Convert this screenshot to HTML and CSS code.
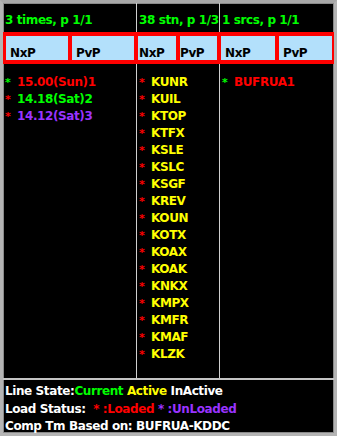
FILE: index.html
```html
<!DOCTYPE html>
<html lang="en">
<head>
  <meta charset="UTF-8">
  <title>Load Status</title>
  <link rel="stylesheet" href="styles.css">
</head>
<body>
  <div class="panel">
    <div class="cols heads">
      <div class="col">3 times, p 1/1</div>
      <div class="col">38 stn, p 1/3</div>
      <div class="col">1 srcs, p 1/1</div>
    </div>

    <div class="btns">
      <div class="btn">NxP</div>
      <div class="btn">PvP</div>
      <div class="btn tight">NxP</div>
      <div class="btn flush">PvP</div>
      <div class="btn">NxP</div>
      <div class="btn">PvP</div>
    </div>

    <div class="cols lists">
      <ul class="col">
        <li><span class="star green">*</span><span class="red">15.00(Sun)1</span></li>
        <li><span class="star red">*</span><span class="green">14.18(Sat)2</span></li>
        <li><span class="star red">*</span><span class="purple">14.12(Sat)3</span></li>
      </ul>
      <ul class="col stations">
        <li><span class="star red">*</span>KUNR</li>
        <li><span class="star red">*</span>KUIL</li>
        <li><span class="star red">*</span>KTOP</li>
        <li><span class="star red">*</span>KTFX</li>
        <li><span class="star red">*</span>KSLE</li>
        <li><span class="star red">*</span>KSLC</li>
        <li><span class="star red">*</span>KSGF</li>
        <li><span class="star red">*</span>KREV</li>
        <li><span class="star red">*</span>KOUN</li>
        <li><span class="star red">*</span>KOTX</li>
        <li><span class="star red">*</span>KOAX</li>
        <li><span class="star red">*</span>KOAK</li>
        <li><span class="star red">*</span>KNKX</li>
        <li><span class="star red">*</span>KMPX</li>
        <li><span class="star red">*</span>KMFR</li>
        <li><span class="star red">*</span>KMAF</li>
        <li><span class="star red">*</span>KLZK</li>
      </ul>
      <ul class="col">
        <li><span class="star green">*</span><span class="red">BUFRUA1</span></li>
      </ul>
    </div>

    <div class="legend">
      <div class="line">Line State:<span class="green">Current </span><span class="yellow">Active </span>InActive</div>
      <div class="line">Load Status:  <span class="red">* :Loaded</span> <span class="purple">* :UnLoaded</span></div>
      <div class="line">Comp Tm Based on: BUFRUA-KDDC</div>
    </div>
  </div>
</body>
</html>
```

FILE: styles.css
```css
body {
  margin: 0;
  background: #c0c0c0;
  font-family: 'DejaVu Sans', sans-serif;
  font-weight: bold;
  font-size: 12px;
  letter-spacing: -0.4px;
}

.panel {
  box-sizing: border-box;
  width: 337px;
  height: 436px;
  background: #000;
  border: 3px solid #b4b4b4;
  border-top-color: #a8a8a8;
  box-shadow: inset 0 0 0 1px #8a8a8a;
  display: flex;
  flex-direction: column;
  overflow: hidden;
}

.cols {
  display: grid;
  grid-template-columns: 133px 83px 1fr;
}

.cols .col + .col {
  border-left: 1px solid #cfcfcf;
}

.heads {
  height: 29px;
  color: #00ff00;
  line-height: 14px;
}

.heads .col {
  padding: 10px 0 0 2px;
  white-space: nowrap;
  overflow: hidden;
}

.btns {
  height: 32px;
  box-sizing: border-box;
  padding: 4px 1px 4px 3px;
  background: #ff0000;
  display: grid;
  grid-template-columns: 62px 62px 38px 37px 54px 53px;
  column-gap: 4px;
}

.btn {
  background: #b3e0fb;
  color: #000;
  line-height: 14px;
  padding-left: 4px;
  display: flex;
  align-items: flex-end;
  overflow: hidden;
}

.btn.tight { padding-left: 1px; }
.btn.flush { padding-left: 0; }

.lists {
  flex: 1;
  min-height: 0;
}

.lists .col {
  list-style: none;
  margin: 0;
  padding: 10px 0 0 2px;
  line-height: 17px;
  white-space: nowrap;
}

.stations { color: #ffff00; }

.star {
  display: inline-block;
  width: 12px;
  font-size: 11px;
}

.legend {
  box-sizing: border-box;
  height: 55px;
  flex: none;
  border-top: 2px solid #c4c4c4;
  padding: 3px 0 0 2px;
  color: #fff;
  line-height: 17.5px;
}

.line {
  white-space: pre;
}

.red { color: #ff0000; }
.green { color: #00ff00; }
.yellow { color: #ffff00; }
.purple { color: #9933ff; }
```
